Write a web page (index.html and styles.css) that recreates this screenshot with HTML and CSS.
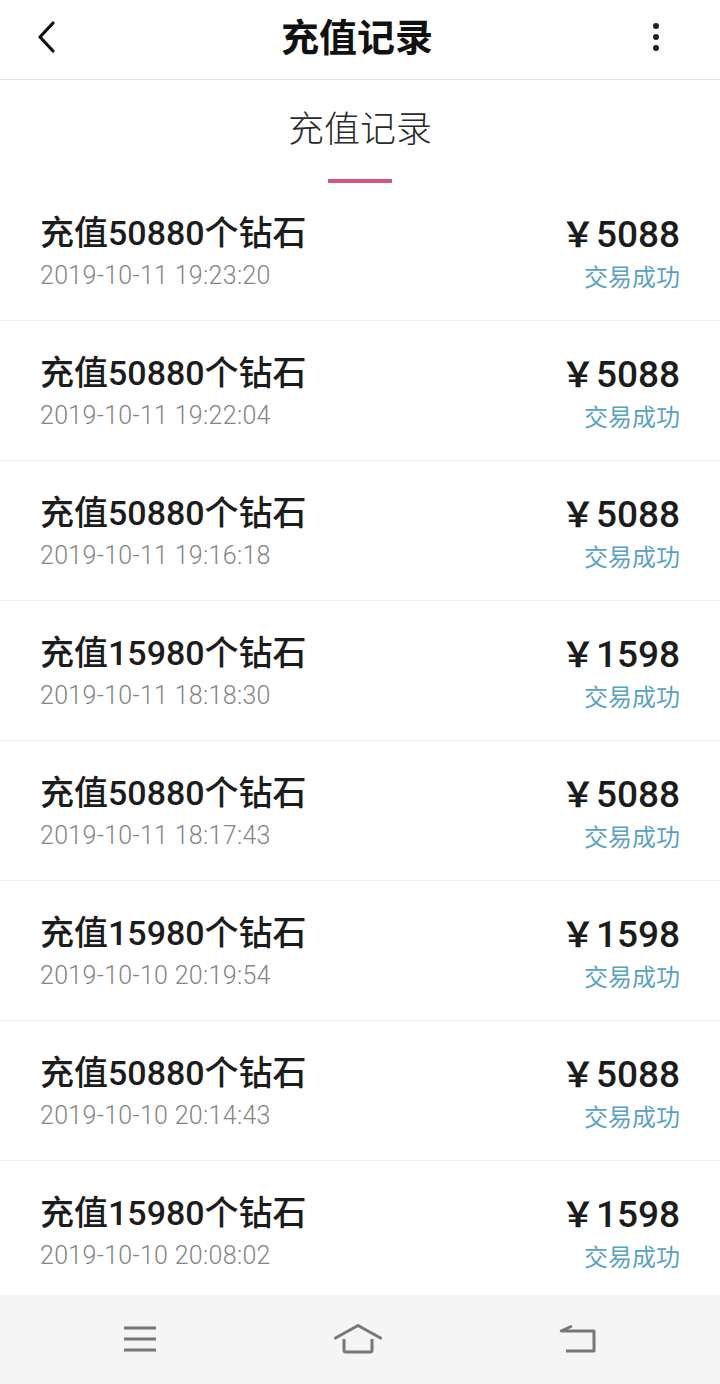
FILE: index.html
```html
<!DOCTYPE html>
<html lang="zh-CN">
<head>
    <meta charset="UTF-8">
    <meta name="viewport" content="width=device-width, initial-scale=1.0">
    <title>充值记录</title>
    <link rel="stylesheet" href="styles.css">
</head>
<body>
    <header class="top-bar">
        <span class="top-icon back">
            <svg width="24" height="34" viewBox="0 0 24 34"><path d="M18 3 L5 17 L18 31" fill="none" stroke="#111" stroke-width="3.2" stroke-linecap="round" stroke-linejoin="round"/></svg>
        </span>
        <h1 class="top-title">充值记录</h1>
        <span class="top-icon more">
            <svg width="10" height="30" viewBox="0 0 10 30"><circle cx="5" cy="4" r="3" fill="#222"/><circle cx="5" cy="15" r="3" fill="#222"/><circle cx="5" cy="26" r="3" fill="#222"/></svg>
        </span>
    </header>

    <div class="tab-bar">
        <div class="tab active">充值记录</div>
    </div>

    <ul class="record-list">
        <li class="record">
            <div class="record-left"><div class="record-name">充值50880个钻石</div><div class="record-time">2019-10-11 19:23:20</div></div>
            <div class="record-right"><div class="record-amount"><span class="yen">￥</span>5088</div><div class="record-status">交易成功</div></div>
        </li>
        <li class="record">
            <div class="record-left"><div class="record-name">充值50880个钻石</div><div class="record-time">2019-10-11 19:22:04</div></div>
            <div class="record-right"><div class="record-amount"><span class="yen">￥</span>5088</div><div class="record-status">交易成功</div></div>
        </li>
        <li class="record">
            <div class="record-left"><div class="record-name">充值50880个钻石</div><div class="record-time">2019-10-11 19:16:18</div></div>
            <div class="record-right"><div class="record-amount"><span class="yen">￥</span>5088</div><div class="record-status">交易成功</div></div>
        </li>
        <li class="record">
            <div class="record-left"><div class="record-name">充值15980个钻石</div><div class="record-time">2019-10-11 18:18:30</div></div>
            <div class="record-right"><div class="record-amount"><span class="yen">￥</span>1598</div><div class="record-status">交易成功</div></div>
        </li>
        <li class="record">
            <div class="record-left"><div class="record-name">充值50880个钻石</div><div class="record-time">2019-10-11 18:17:43</div></div>
            <div class="record-right"><div class="record-amount"><span class="yen">￥</span>5088</div><div class="record-status">交易成功</div></div>
        </li>
        <li class="record">
            <div class="record-left"><div class="record-name">充值15980个钻石</div><div class="record-time">2019-10-10 20:19:54</div></div>
            <div class="record-right"><div class="record-amount"><span class="yen">￥</span>1598</div><div class="record-status">交易成功</div></div>
        </li>
        <li class="record">
            <div class="record-left"><div class="record-name">充值50880个钻石</div><div class="record-time">2019-10-10 20:14:43</div></div>
            <div class="record-right"><div class="record-amount"><span class="yen">￥</span>5088</div><div class="record-status">交易成功</div></div>
        </li>
        <li class="record">
            <div class="record-left"><div class="record-name">充值15980个钻石</div><div class="record-time">2019-10-10 20:08:02</div></div>
            <div class="record-right"><div class="record-amount"><span class="yen">￥</span>1598</div><div class="record-status">交易成功</div></div>
        </li>
    </ul>

    <nav class="nav-bar">
        <svg width="34" height="26" viewBox="0 0 34 26"><path d="M1 2 H33 M1 13 H33 M1 24 H33" stroke="#777" stroke-width="3"/></svg>
        <svg width="48" height="30" viewBox="0 0 48 30"><path d="M1.5 14 L24 1.5 L46.5 14" fill="none" stroke="#777" stroke-width="3" stroke-linejoin="round" stroke-linecap="round"/><path d="M10 15 V26 Q10 28 12 28 H36 Q38 28 38 26 V15" fill="none" stroke="#777" stroke-width="3"/></svg>
        <svg width="38" height="28" viewBox="0 0 38 28"><path d="M3 6 H35 V26 H7" fill="none" stroke="#777" stroke-width="3" stroke-linejoin="round"/><path d="M2 6 L12 1.5" fill="none" stroke="#777" stroke-width="2.5" stroke-linecap="round"/></svg>
    </nav>
</body>
</html>
```

FILE: styles.css
```css
body {
    margin: 0;
    width: 720px;
    height: 1384px;
    display: flex;
    flex-direction: column;
    overflow: hidden;
    background: #fff;
    font-family: Roboto, "Noto Sans CJK SC", sans-serif;
    color: #1f1f1f;
}

.top-bar {
    height: 79px;
    flex-shrink: 0;
    display: flex;
    align-items: center;
    justify-content: space-between;
    padding: 0 59px 0 35px;
    border-bottom: 1px solid #e2e2e2;
}

.top-icon {
    display: flex;
    align-items: center;
}

.top-icon.back {
    margin-top: -6px;
}

.top-icon.more {
    margin-top: -5px;
}

.top-title {
    margin: 0 0 0 4px;
    font-size: 38px;
    font-weight: bold;
    color: #111;
    line-height: 1;
    padding-bottom: 4px;
}

.tab-bar {
    height: 101px;
    flex-shrink: 0;
    display: flex;
    justify-content: center;
}

.tab {
    position: relative;
    padding-top: 28px;
    font-size: 36px;
    font-weight: 300;
    color: #2a2a2a;
    line-height: 44px;
}

.tab.active {
    height: 75px;
}

.tab.active::after {
    content: "";
    position: absolute;
    left: 50%;
    bottom: 0;
    margin-left: -32px;
    width: 64px;
    height: 4px;
    background: #d65480;
}

.record-list {
    list-style: none;
    margin: 0;
    padding: 0;
    flex: 1;
    overflow: hidden;
}

.record {
    height: 139px;
    display: flex;
    justify-content: space-between;
    align-items: flex-start;
    padding: 0 40px;
    border-bottom: 1px solid #f0f0f0;
}

.record-left,
.record-right {
    padding-top: 30px;
}

.record-right {
    text-align: right;
}

.record-name {
    font-size: 34px;
    font-weight: 500;
    line-height: 44px;
    color: #1c1c1c;
}

.record-time {
    font-size: 25px;
    font-weight: 300;
    letter-spacing: 0.3px;
    line-height: 42px;
    color: #858585;
}

.record-amount {
    font-size: 37px;
    font-weight: 500;
    line-height: 44px;
    color: #1c1c1c;
}

.yen {
    font-family: "Noto Sans CJK SC", sans-serif;
    font-size: 34px;
    font-weight: bold;
    margin-right: 1px;
}

.record-status {
    font-size: 24px;
    line-height: 42px;
    color: #5aa2c2;
}

.nav-bar {
    height: 87px;
    flex-shrink: 0;
    background: #f5f5f5;
    display: flex;
    justify-content: space-between;
    align-items: center;
    padding: 0 123px 2px 123px;
}
```
